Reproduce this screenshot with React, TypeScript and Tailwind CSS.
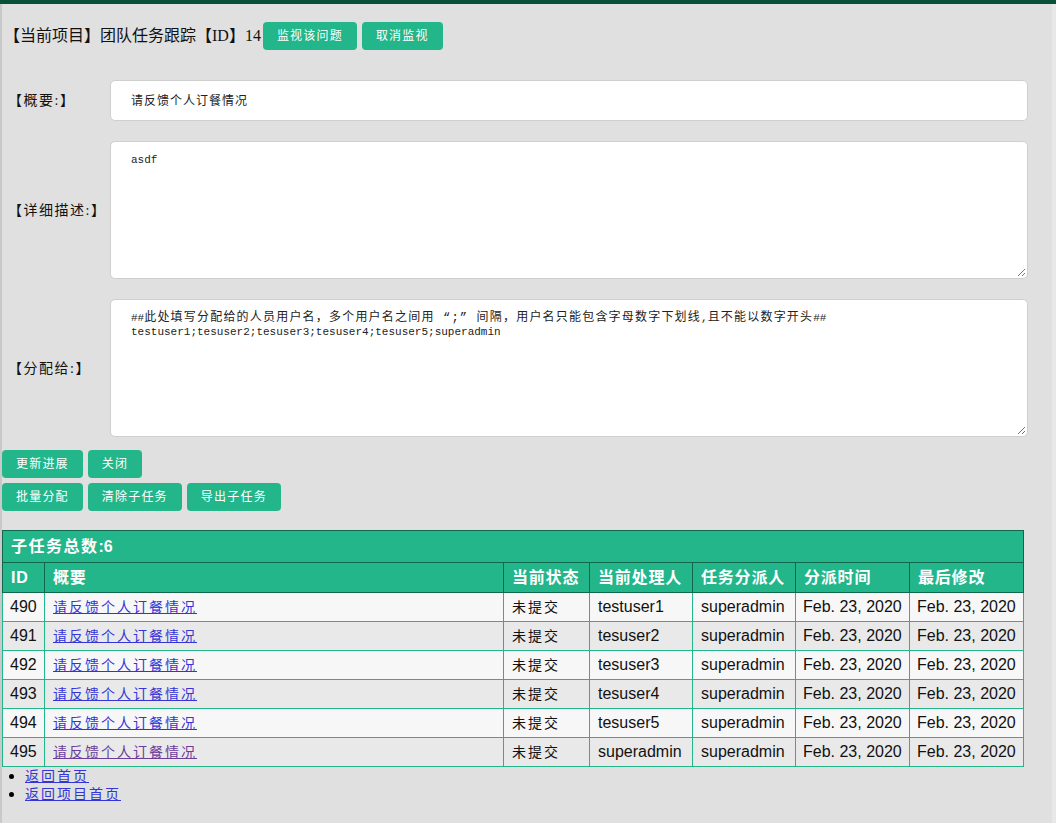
import React from 'react';

const serif = { fontFamily: '"Liberation Serif", "Noto Sans CJK SC", serif' };
const mono = { fontFamily: '"Liberation Mono", "Noto Sans CJK SC", monospace' };

const rows = [
  { id: 490, user: 'testuser1' },
  { id: 491, user: 'tesuser2' },
  { id: 492, user: 'tesuser3' },
  { id: 493, user: 'tesuser4' },
  { id: 494, user: 'tesuser5' },
  { id: 495, user: 'superadmin', visited: true },
];

function Btn({ children }: { children: React.ReactNode }) {
  return (
    <button className="h-[28px] rounded-[4px] bg-[#23b68b] px-[14px] text-[12px] tracking-[1.2px] text-white">
      {children}
    </button>
  );
}

function Grip() {
  return (
    <svg className="absolute right-[1px] bottom-[1px]" width="9" height="9" viewBox="0 0 9 9">
      <path d="M8 1L1 8M8 5L5 8" stroke="#777" strokeWidth="1" fill="none" />
    </svg>
  );
}

function Field({ label, tall, children }: { label: string; tall?: boolean; children: React.ReactNode }) {
  return (
    <div className="flex items-center">
      <div className="w-[108px] shrink-0 pl-[6px] text-[14px] tracking-[1.5px] text-[#111]">{label}</div>
      <div
        className={
          'relative w-[918px] rounded-[5px] border border-[#cfcfcf] bg-white px-[20px] text-[#222] ' +
          (tall ? 'h-[138px] py-[11px] text-[11px] leading-[14px]' : 'flex h-[41px] items-center text-[12px] tracking-[1px]')
        }
        style={tall ? mono : undefined}
      >
        {children}
        {tall && <Grip />}
      </div>
    </div>
  );
}

const cj = 'text-[12px] tracking-[1.2px]';
const th = 'whitespace-nowrap border border-[#11674c] px-[8px] font-bold tracking-[0.8px]';
const td = 'whitespace-nowrap border border-[#23b68b]';

export default function App() {
  return (
    <div className="min-h-[823px] w-[1056px] border-l-2 border-r-4 border-l-[#c9c9c9] border-r-[#e8e8e8] bg-[#e0e0e0]" style={serif}>
      <div className="-ml-[2px] h-[4px] w-[1056px] bg-[#07503a]" />

      <div className="flex items-center gap-[2px] pt-[18px] pl-[2px]">
        <span className="text-[16px] text-[#111]">【当前项目】团队任务跟踪【ID】14</span>
        <div className="flex gap-[5px]">
          <Btn>监视该问题</Btn>
          <Btn>取消监视</Btn>
        </div>
      </div>

      <div className="mt-[30px] flex flex-col gap-[20px]">
        <Field label="【概要:】">请反馈个人订餐情况</Field>
        <Field label="【详细描述:】" tall>
          asdf
        </Field>
        <Field label="【分配给:】" tall>
          <div className="whitespace-nowrap">
            ##<span className={cj}>此处填写分配给的人员用户名，多个用户名之间用 “;” 间隔，用户名只能包含字母数字下划线</span>,
            <span className={cj}>且不能以数字开头</span>##
          </div>
          <div>testuser1;tesuser2;tesuser3;tesuser4;tesuser5;superadmin</div>
        </Field>
      </div>

      <div className="mt-[13px] flex flex-col gap-[5px]">
        <div className="flex gap-[5px]">
          <Btn>更新进展</Btn>
          <Btn>关闭</Btn>
        </div>
        <div className="flex gap-[5px]">
          <Btn>批量分配</Btn>
          <Btn>清除子任务</Btn>
          <Btn>导出子任务</Btn>
        </div>
      </div>

      <table
        className="mt-[19px] w-[1022px] border-collapse text-[16px]"
        style={{ fontFamily: '"Liberation Sans", "Noto Sans CJK SC", sans-serif' }}
      >
        <thead>
          <tr>
            <th colSpan={7} className="h-[32px] border border-[#11674c] bg-[#23b68b] px-[8px] text-left font-bold text-white">
              <span className="tracking-[1.5px]">子任务总数</span>:6
            </th>
          </tr>
          <tr className="bg-[#23b68b] text-left text-white">
            <th className={'h-[30px] w-[42px] ' + th}>ID</th>
            <th className={th}>概要</th>
            <th className={'w-[86px] ' + th}>当前状态</th>
            <th className={'w-[103px] ' + th}>当前处理人</th>
            <th className={'w-[103px] ' + th}>任务分派人</th>
            <th className={'w-[114px] ' + th}>分派时间</th>
            <th className={'w-[114px] ' + th}>最后修改</th>
          </tr>
        </thead>
        <tbody className="text-[#111]">
          {rows.map((r, i) => (
            <tr key={r.id} className={i % 2 === 0 ? 'bg-[#f7f7f7]' : 'bg-[#e9e9e9]'}>
              <td className={'h-[29px] px-[7px] ' + td}>{r.id}</td>
              <td className={'px-[8px] ' + td}>
                <a
                  href="#"
                  className={'text-[14px] tracking-[2px] underline ' + (r.visited ? 'text-[#6a3c9c]' : 'text-[#3434d8]')}
                  style={serif}
                >
                  请反馈个人订餐情况
                </a>
              </td>
              <td className={'px-[8px] text-[14px] tracking-[2px] ' + td} style={serif}>
                未提交
              </td>
              <td className={'px-[8px] ' + td}>{r.user}</td>
              <td className={'px-[8px] ' + td}>superadmin</td>
              <td className={'px-[7px] ' + td}>Feb. 23, 2020</td>
              <td className={'px-[7px] ' + td}>Feb. 23, 2020</td>
            </tr>
          ))}
        </tbody>
      </table>

      <ul className="list-disc pl-[23px] text-[16px] marker:text-[#000]">
        <li className="h-[18px] leading-[18px]">
          <a href="#" className="text-[14px] leading-[18px] tracking-[2px] text-[#3434d8] underline">返回首页</a>
        </li>
        <li className="h-[18px] leading-[18px]">
          <a href="#" className="text-[14px] leading-[18px] tracking-[2px] text-[#3434d8] underline">返回项目首页</a>
        </li>
      </ul>
    </div>
  );
}
